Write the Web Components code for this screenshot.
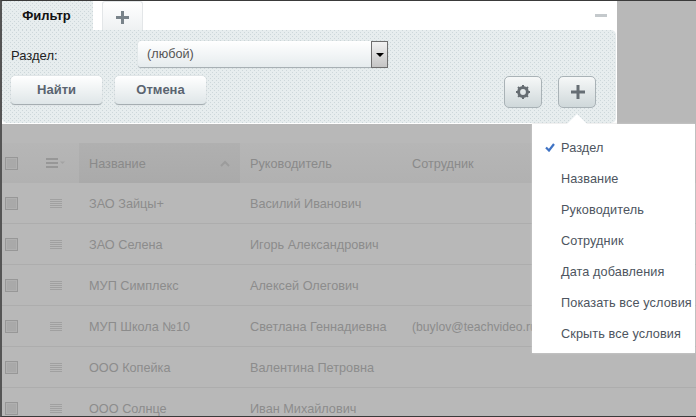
<!DOCTYPE html>
<html>
<head>
<meta charset="utf-8">
<title>Фильтр</title>
<style>
  html, body { margin: 0; height: 100%; overflow: hidden; }
  body { font-family: "Liberation Sans", Arial, sans-serif; font-size: 12.7px; }
</style>
</head>
<body>
<grid-page>
  <filter-panel></filter-panel>
  <data-grid>
    <grid-row name="ЗАО Зайцы+" boss="Василий Иванович"></grid-row>
    <grid-row name="ЗАО Селена" boss="Игорь Александрович"></grid-row>
    <grid-row name="МУП Симплекс" boss="Алексей Олегович"></grid-row>
    <grid-row name="МУП Школа №10" boss="Светлана Геннадиевна" staff="(buylov@teachvideo.ru)"></grid-row>
    <grid-row name="ООО Копейка" boss="Валентина Петровна"></grid-row>
    <grid-row name="ООО Солнце" boss="Иван Михайлович"></grid-row>
  </data-grid>
  <popup-menu>
    <menu-entry checked>Раздел</menu-entry>
    <menu-entry>Название</menu-entry>
    <menu-entry>Руководитель</menu-entry>
    <menu-entry>Сотрудник</menu-entry>
    <menu-entry>Дата добавления</menu-entry>
    <menu-entry>Показать все условия</menu-entry>
    <menu-entry>Скрыть все условия</menu-entry>
  </popup-menu>
</grid-page>

<script>
class GridPage extends HTMLElement {
  constructor() {
    super();
    this.attachShadow({ mode: 'open' });
    this.shadowRoot.innerHTML = `
      <style>
        :host {
          display: flex;
          flex-direction: column;
          position: relative;
          box-sizing: border-box;
          width: 696px;
          height: 417px;
          overflow: hidden;
          background: #b8b8b8;
          border-top: 1px solid #3a3a3a;
          border-bottom: 1px solid #3a3a3a;
          border-left: 2px solid #555;
        }
      </style>
      <slot></slot>
    `;
  }
}

const dots = `
  background-color: #e7edee;
  background-image:
    radial-gradient(circle at 0.5px 0.5px, #cdd7da 0.6px, transparent 0.61px),
    radial-gradient(circle at 2.5px 2.5px, #cdd7da 0.6px, transparent 0.61px);
  background-size: 4px 4px;
`;

class FilterPanel extends HTMLElement {
  constructor() {
    super();
    this.attachShadow({ mode: 'open' });
    this.shadowRoot.innerHTML = `
      <style>
        :host {
          display: block;
          flex: none;
          width: 615px;
          height: 122px;
          background: #fff;
          border-bottom: 1px solid #fff;
          color: #222;
        }
        .tabs {
          display: flex;
          height: 29px;
          align-items: flex-end;
          position: relative;
        }
        .tab-active {
          width: 91px;
          height: 29px;
          line-height: 29px;
          text-align: center;
          font-weight: bold;
          font-size: 13px;
          color: #111;
          ${dots}
          padding-right: 2px;
          box-sizing: border-box;
        }
        .tab-add {
          box-sizing: border-box;
          width: 41px;
          height: 29px;
          margin-left: 9px;
          padding-top: 2px;
          border: 1px solid #e3e6e8;
          border-bottom: 0;
          border-radius: 3px 3px 0 0;
          background: linear-gradient(#fff, #eef1f2);
          display: flex;
          align-items: center;
          justify-content: center;
        }
        .collapse {
          position: absolute;
          right: 10px;
          top: 13px;
          width: 12px;
          height: 3px;
          background: #c4c9cc;
        }
        .body {
          height: 93px;
          margin-right: 1px;
          box-sizing: border-box;
          padding: 11px 9px 0;
          ${dots}
          border-radius: 0 5px 5px 5px;
        }
        .field {
          display: flex;
          align-items: center;
          height: 27px;
          font-size: 13px;
        }
        .field label { width: 127px; padding-top: 2px; }
        .select {
          display: flex;
          width: 250px;
          height: 27px;
          box-sizing: border-box;
          border-radius: 3px;
          background: linear-gradient(#fff, #e6ecee);
          border-bottom: 1px solid #a8b0b4;
          box-shadow: 0 0 1px #b5bdc0;
          color: #555;
          font-size: 12.7px;
          line-height: 26px;
        }
        .select span { flex: 1; padding-left: 9px; }
        .select i {
          box-sizing: border-box;
          width: 17px;
          height: 27px;
          border: 1px solid #6e6e6e;
          background: linear-gradient(#f2f2f2, #c4c4c4);
          display: flex;
          align-items: center;
          justify-content: center;
        }
        .select i::after {
          content: '';
          border: 4px solid transparent;
          border-top-color: #000;
          border-bottom-width: 0;
        }
        .actions {
          display: flex;
          align-items: flex-start;
          margin-top: 8px;
        }
        .btn {
          box-sizing: border-box;
          width: 91px;
          height: 29px;
          line-height: 28px;
          text-align: center;
          font-weight: bold;
          font-size: 13px;
          color: #5a6470;
          border-radius: 4px;
          background: linear-gradient(#fff, #dfe6e8);
          border-bottom: 1px solid #a5adb1;
          box-shadow: 0 0 1px #a9b1b5;
          margin-right: 13px;
        }
        .spacer { flex: 1; }
        .icon-btn {
          box-sizing: border-box;
          width: 38px;
          height: 32px;
          margin-left: 16px;
          border: 1px solid #a9b2b6;
          border-radius: 5px;
          background: linear-gradient(#f6f8f8, #cfd8da);
          display: flex;
          align-items: center;
          justify-content: center;
        }
        .icon-btn.last { margin-right: 11px; padding-left: 2px; }
      </style>
      <div class="tabs">
        <div class="tab-active">Фильтр</div>
        <div class="tab-add">
          <svg width="13" height="13" viewBox="0 0 13 13"><path d="M5 0h3v5h5v3H8v5H5V8H0V5h5z" fill="#79838a"/></svg>
        </div>
        <div class="collapse"></div>
      </div>
      <div class="body">
        <div class="field">
          <label>Раздел:</label>
          <div class="select"><span>(любой)</span><i></i></div>
        </div>
        <div class="actions">
          <div class="btn">Найти</div>
          <div class="btn">Отмена</div>
          <div class="spacer"></div>
          <div class="icon-btn">
            <svg width="14" height="14" viewBox="0 0 14 14"><circle cx="7" cy="7" r="4.4" fill="none" stroke="#666d72" stroke-width="3"/><path d="M7 0v14M0 7h14M2 2l10 10M12 2L2 12" stroke="#666d72" stroke-width="2" stroke-dasharray="2.4 9.2"/></svg>
          </div>
          <div class="icon-btn last">
            <svg width="14" height="14" viewBox="0 0 14 14"><path d="M5.5 0h3v5.5H14v3H8.5V14h-3V8.5H0v-3h5.5z" fill="#666e74"/></svg>
          </div>
        </div>
      </div>
    `;
  }
}

class DataGrid extends HTMLElement {
  constructor() {
    super();
    this.attachShadow({ mode: 'open' });
    this.shadowRoot.innerHTML = `
      <style>
        :host {
          display: block;
          padding-top: 19px;
          color: #8c8c8c;
        }
        .head {
          display: grid;
          grid-template-columns: 77px 161px 162px 1fr;
          height: 40px;
          align-items: stretch;
          background: linear-gradient(#b6b6b6, #b1b1b1);
          color: #8a8a8a;
        }
        .head > div { display: flex; align-items: center; padding-left: 10px; }
        .head span.label { padding-top: 2px; }
        .head .first { padding-left: 3px; }
        .head .sorted {
          background: linear-gradient(#b0b0b0, #aaaaaa);
          justify-content: space-between;
          padding-right: 10px;
        }
        .box {
          box-sizing: border-box;
          width: 13px;
          height: 13px;
          border: 1px solid #979797;
          box-shadow: inset 0 0 0 1px #b0b0b0;
          background: #a9a9a9;
        }
      </style>
      <div class="head">
        <div class="first">
          <span class="box"></span>
          <svg style="margin-left:28px" width="20" height="10" viewBox="0 0 20 10"><path d="M0 0h12v2H0zM0 4h12v2H0zM0 8h12v2H0z" fill="#979797"/><path d="M14 3.5h5L16.5 6z" fill="#a3a3a3"/></svg>
        </div>
        <div class="sorted"><span class="label">Название</span>
          <svg width="10" height="7" viewBox="0 0 10 7"><path d="M1 6l4-4 4 4" fill="none" stroke="#9c9c9c" stroke-width="2"/></svg>
        </div>
        <div><span class="label">Руководитель</span></div>
        <div><span class="label">Сотрудник</span></div>
      </div>
      <slot></slot>
    `;
  }
}

class GridRow extends HTMLElement {
  constructor() {
    super();
    this.attachShadow({ mode: 'open' });
    this.shadowRoot.innerHTML = `
      <style>
        :host {
          display: grid;
          grid-template-columns: 77px 161px 162px 1fr;
          box-sizing: border-box;
          height: 41px;
          align-items: center;
          border-bottom: 1px solid #adadad;
        }
        .tools { display: flex; align-items: center; padding-left: 3px; }
        .box {
          box-sizing: border-box;
          width: 13px;
          height: 13px;
          border: 1px solid #979797;
          box-shadow: inset 0 0 0 1px #b0b0b0;
          background: #a9a9a9;
        }
        svg { margin-left: 32px; }
        .cell { padding: 2px 0 0 10px; white-space: nowrap; }
        .staff { font-size: 12.2px; }
      </style>
      <div class="tools">
        <span class="box"></span>
        <svg width="12" height="9" viewBox="0 0 12 9"><path d="M0 .5h12M0 2.5h12M0 4.5h12M0 6.5h12M0 8.5h12" stroke="#a0a0a0"/></svg>
      </div>
      <div class="cell name"></div>
      <div class="cell boss"></div>
      <div class="cell staff"></div>
    `;
  }

  connectedCallback() {
    this.shadowRoot.querySelector('.name').textContent = this.getAttribute('name');
    this.shadowRoot.querySelector('.boss').textContent = this.getAttribute('boss');
    this.shadowRoot.querySelector('.staff').textContent = this.getAttribute('staff') || '';
  }
}

class PopupMenu extends HTMLElement {
  constructor() {
    super();
    this.attachShadow({ mode: 'open' });
    this.shadowRoot.innerHTML = `
      <style>
        :host {
          display: block;
          position: absolute;
          left: 530px;
          top: 123px;
          width: 163px;
          height: 229px;
          box-sizing: border-box;
          padding: 8px 0;
          background: #fff;
          box-shadow: 0 0 2px #cfcfcf;
          color: #4d5560;
        }
        .arrow {
          position: absolute;
          left: 35px;
          top: -10px;
          width: 0;
          height: 0;
          border: 10px solid transparent;
          border-top: 0;
          border-bottom-color: #fff;
        }
      </style>
      <div class="arrow"></div>
      <slot></slot>
    `;
  }
}

class MenuEntry extends HTMLElement {
  constructor() {
    super();
    this.attachShadow({ mode: 'open' });
    this.shadowRoot.innerHTML = `
      <style>
        :host {
          display: flex;
          align-items: center;
          height: 31px;
          padding-left: 13px;
          white-space: nowrap;
          letter-spacing: 0.1px;
        }
        svg { width: 10px; height: 9px; margin-right: 6px; visibility: hidden; flex: none; }
        :host([checked]) svg { visibility: visible; }
      </style>
      <svg viewBox="0 0 10 9"><path d="M1 4.5l3 3L9 1" fill="none" stroke="#3f73c4" stroke-width="2.2"/></svg>
      <slot></slot>
    `;
  }
}

customElements.define('grid-page', GridPage);
customElements.define('filter-panel', FilterPanel);
customElements.define('data-grid', DataGrid);
customElements.define('grid-row', GridRow);
customElements.define('popup-menu', PopupMenu);
customElements.define('menu-entry', MenuEntry);
</script>
</body>
</html>
